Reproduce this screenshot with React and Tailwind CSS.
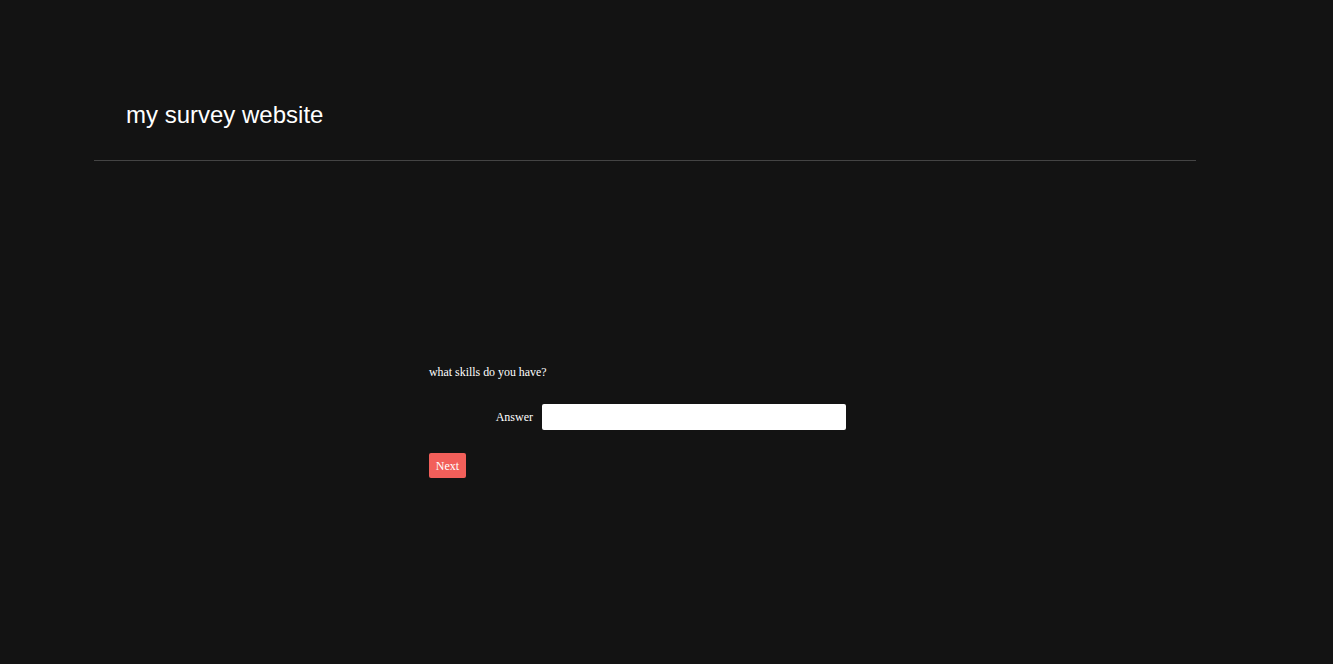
export default function App() {
  return (
    <main className="min-h-[664px] bg-[#131313] text-white">
      <header className="ml-[94px] w-[1102px] border-b border-[#444444]">
        <div className="h-[160px] pl-[32px] pt-[101px]">
          <h1 className="text-[24px] leading-[28px] font-['Liberation_Sans',Arial,sans-serif]">
            my survey website
          </h1>
        </div>
      </header>

      <section className="ml-[429px] pt-[204px] font-['Liberation_Serif','Times_New_Roman',serif] text-[12px]">
        <p className="leading-[14px] text-[11.9px]">what skills do you have?</p>
        <div className="mt-[25px] flex items-center">
          <label className="w-[113px] text-right pr-[9px]">Answer</label>
          <input className="h-[26px] w-[304px] rounded-[2px] bg-white text-black px-1 outline-none" />
        </div>
        <button className="mt-[23px] h-[25px] w-[37px] rounded-[2px] bg-[#f25f5a] text-white text-[12px]">
          Next
        </button>
      </section>
    </main>
  );
}
